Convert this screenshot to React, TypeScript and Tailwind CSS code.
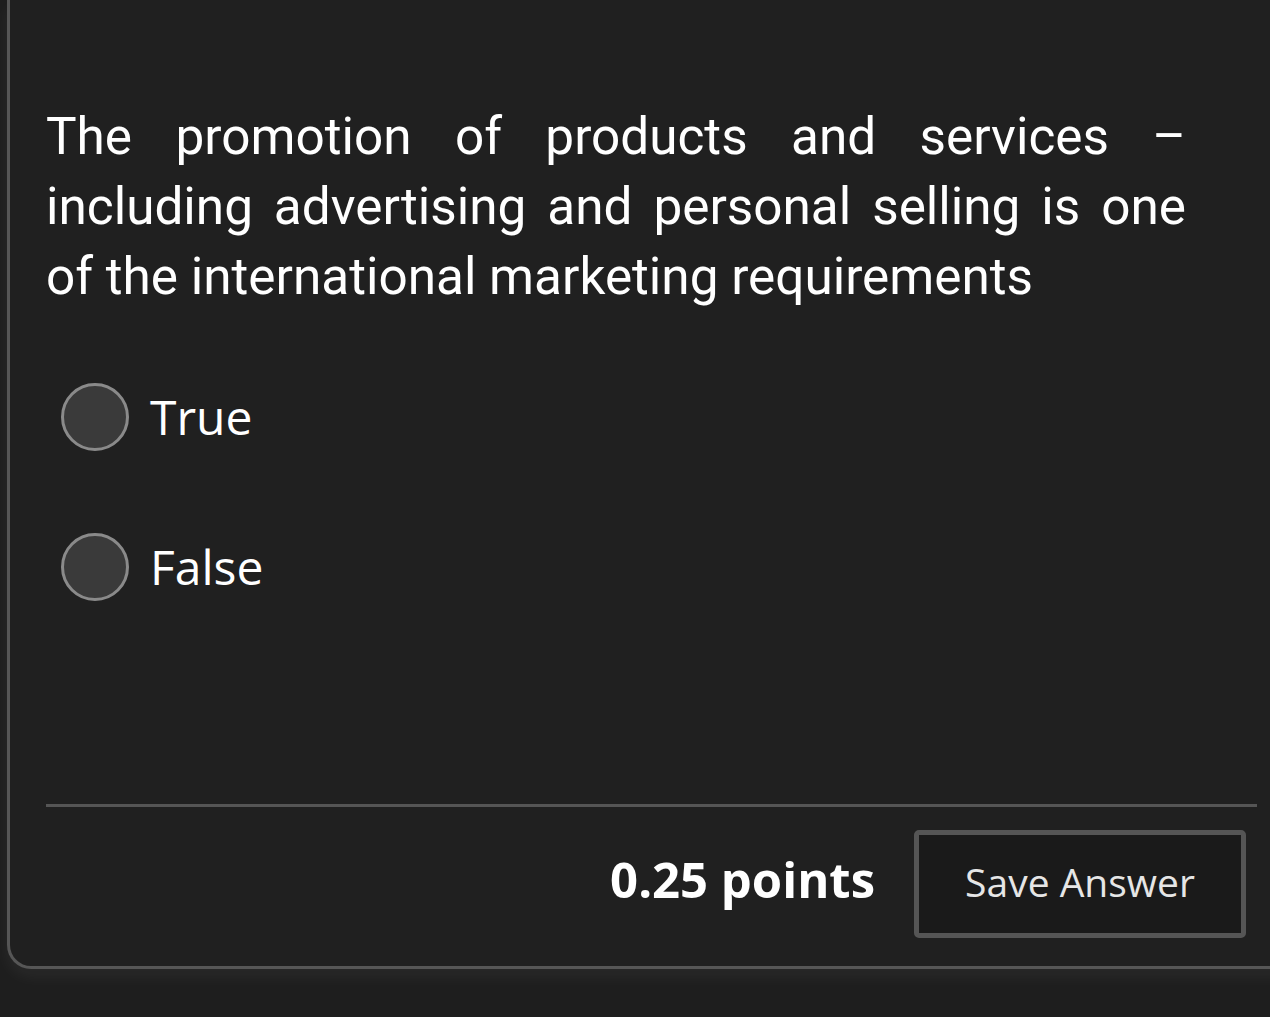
import React from "react";

const options = ["True", "False"];

export default function App() {
  return (
    <div className="min-h-[1017px] w-full overflow-hidden bg-[#1e1e1e]">
      <div className="ml-[7px] w-[1290px] rounded-bl-[24px] border-b-[3px] border-l-[3px] border-[#565656] bg-[#202020] pl-[36px] pr-[40px] pt-[102px] pb-[28px] shadow-[0_8px_16px_rgba(255,255,255,0.05)]">
        <p
          className="w-[1140px] text-justify text-[51.3px] leading-[70px] text-white"
          style={{ fontFamily: "Roboto, 'Liberation Sans', sans-serif" }}
        >
          The promotion of products and services – including advertising and personal selling is one of the international marketing requirements
        </p>

        <div className="mt-[30px]">
          {options.map((opt) => (
            <label
              key={opt}
              className="flex h-[150px] items-center gap-[21px] pl-[15px]"
              style={{ fontFamily: "'Open Sans', 'Liberation Sans', sans-serif" }}
            >
              <span className="h-[68px] w-[68px] shrink-0 rounded-full border-[3px] border-[#8a8a8a] bg-[#3a3a3a]" />
              <span className="text-[48px] leading-none text-white">{opt}</span>
            </label>
          ))}
        </div>

        <div className="mt-[162px] w-[1211px] border-t-[3px] border-[#555555]" />

        <div
          className="mt-[23px] flex w-[1200px] items-center justify-end gap-[39px]"
          style={{ fontFamily: "'Open Sans', 'Liberation Sans', sans-serif" }}
        >
          <span className="mb-[10px] text-[49px] font-bold leading-none text-white">0.25 points</span>
          <button className="flex h-[108px] w-[332px] items-center justify-center rounded-[5px] border-[5px] border-[#555555] bg-[#1a1a1a] pb-[6px] text-[39px] leading-none text-[#e6e6e6]">
            Save Answer
          </button>
        </div>
      </div>
    </div>
  );
}
